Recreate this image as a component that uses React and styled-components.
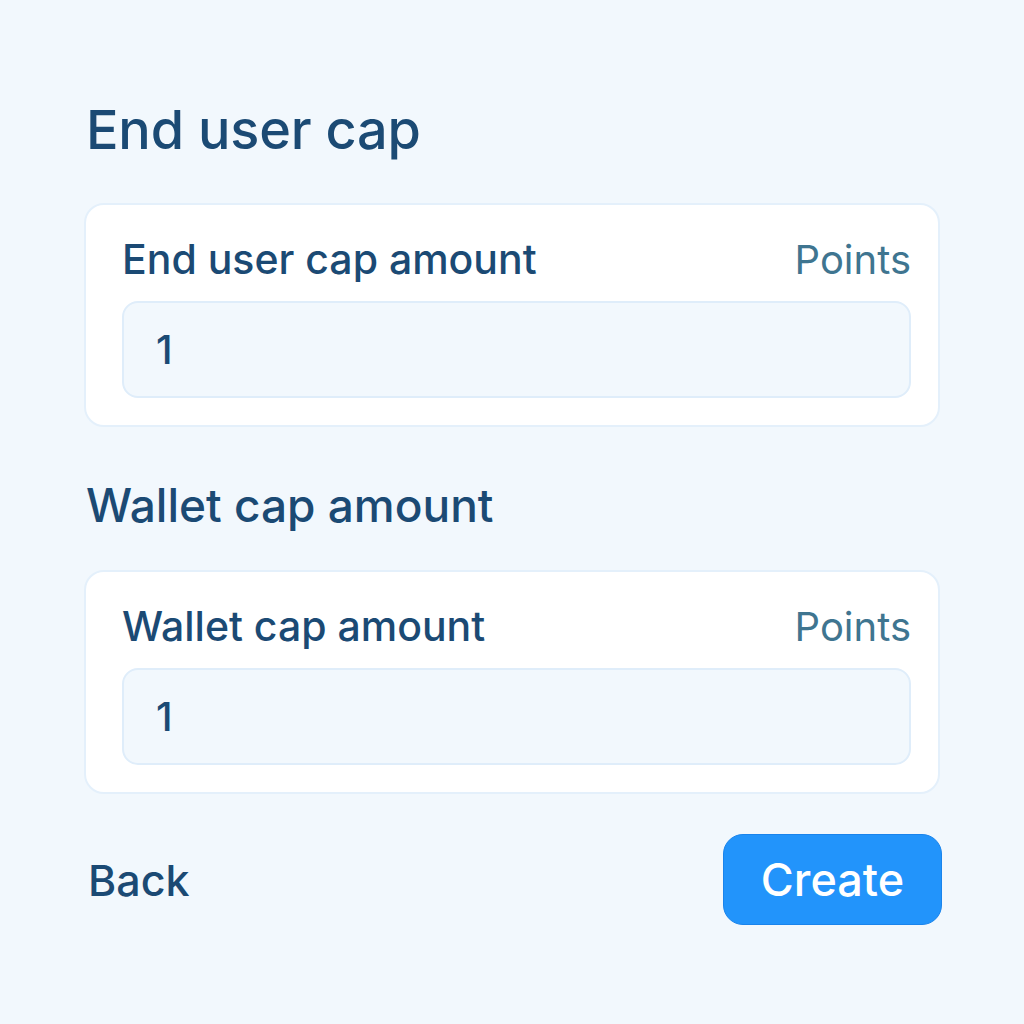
import React, { useState } from "react";
import styled, { createGlobalStyle } from "styled-components";

const GlobalStyle = createGlobalStyle`
	html,
	body {
		margin: 0;
		padding: 0;
		background: #f2f8fd;
	}
	body {
		font-family: Inter, "Noto Sans", "Liberation Sans", sans-serif;
		color: #1b4a74;
	}
`;

const Page = styled.div`
	width: 1024px;
	height: 1024px;
	box-sizing: border-box;
	padding: 94px 84px 0 84px;
	display: flex;
	flex-direction: column;
`;

const Title = styled.h1`
	margin: 0 0 0 2px;
	font-size: 54px;
	font-weight: 500;
	line-height: 72px;
	letter-spacing: -0.2px;
	color: #1b4a74;
`;

const SectionTitle = styled.h2`
	margin: 48px 0 0 2px;
	font-size: 46px;
	font-weight: 500;
	line-height: 60px;
	color: #1b4a74;
`;

const Card = styled.div`
	margin-top: ${(p) => p.$top}px;
	background: #ffffff;
	border: 2px solid #e4f0fb;
	border-radius: 20px;
	padding: 25px 27px 27px 36px;
	display: flex;
	flex-direction: column;
	gap: 13px;
`;

const LabelRow = styled.div`
	display: flex;
	justify-content: space-between;
	align-items: center;
	height: 58px;
`;

const Label = styled.label`
	font-size: 41px;
	font-weight: 500;
	color: #1b4a74;
`;

const Unit = styled.span`
	font-size: 40px;
	font-weight: 400;
	color: #3f7590;
`;

const Input = styled.input`
	box-sizing: border-box;
	width: 100%;
	height: 97px;
	border: 2px solid #dfedfa;
	border-radius: 16px;
	background: #f2f8fd;
	padding: 0 32px;
	font-family: inherit;
	font-size: 40px;
	font-weight: 500;
	color: #1b4a74;
	outline: none;
`;

const Footer = styled.div`
	margin-top: 40px;
	display: flex;
	justify-content: space-between;
	align-items: center;
	padding-left: 4px;
	margin-right: -2px;
`;

const BackLink = styled.button`
	background: none;
	border: none;
	padding: 0;
	font-family: inherit;
	font-size: 43px;
	font-weight: 500;
	color: #1b4a74;
	cursor: pointer;
`;

const CreateButton = styled.button`
	width: 219px;
	height: 91px;
	border: 1px solid #1a84ec;
	border-radius: 20px;
	background: #2294fb;
	color: #ffffff;
	font-family: inherit;
	font-size: 45px;
	font-weight: 500;
	cursor: pointer;
`;

const CapField = ({ label, value, onChange, top }) => (
	<Card $top={top}>
		<LabelRow>
			<Label>{label}</Label>
			<Unit>Points</Unit>
		</LabelRow>
		<Input value={value} onChange={(e) => onChange(e.target.value)} />
	</Card>
);

const App = () => {
	const [userCap, setUserCap] = useState("1");
	const [walletCap, setWalletCap] = useState("1");

	return (
		<>
			<GlobalStyle />
			<Page>
				<Title>End user cap</Title>
				<CapField
					top={37}
					label="End user cap amount"
					value={userCap}
					onChange={setUserCap}
				/>
				<SectionTitle>Wallet cap amount</SectionTitle>
				<CapField
					top={35}
					label="Wallet cap amount"
					value={walletCap}
					onChange={setWalletCap}
				/>
				<Footer>
					<BackLink>Back</BackLink>
					<CreateButton>Create</CreateButton>
				</Footer>
			</Page>
		</>
	);
};

export default App;
